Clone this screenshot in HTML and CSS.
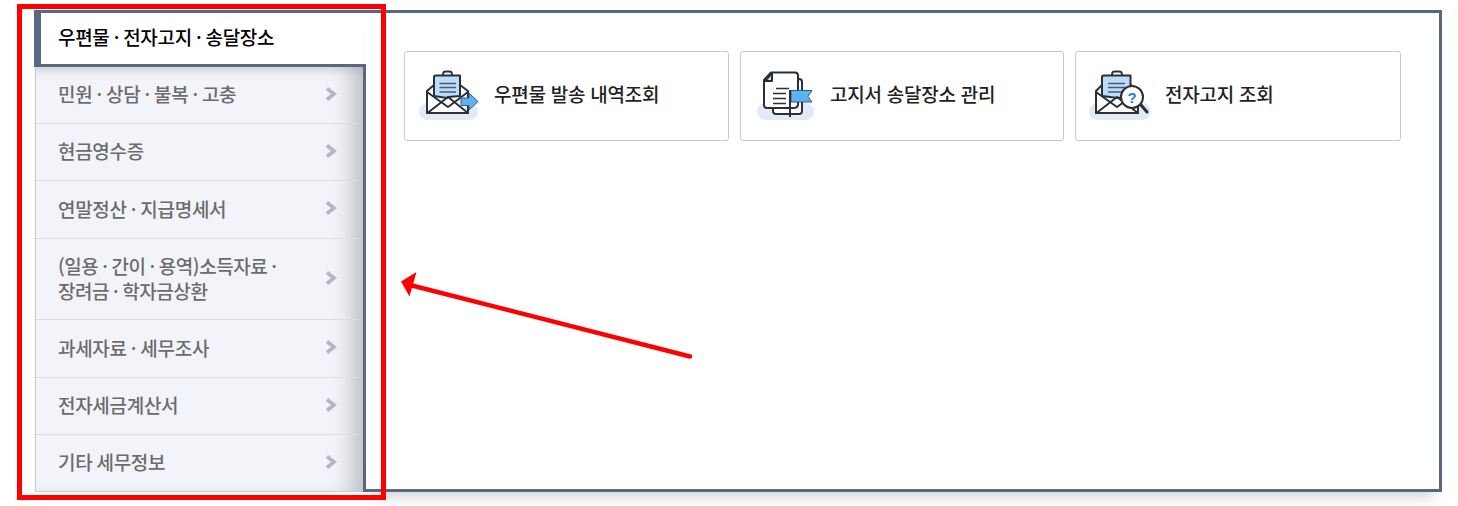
FILE: index.html
```html
<!DOCTYPE html>
<html lang="ko">
<head>
<meta charset="utf-8">
<title>우편물 · 전자고지 · 송달장소</title>
<link rel="stylesheet" href="styles.css">
</head>
<body>
<div class="board">
  <aside class="side">
    <div class="tab-active">우편물 · 전자고지 · 송달장소</div>
    <ul class="tabs">
      <li class="tab"><span>민원 · 상담 · 불복 · 고충</span><svg class="chev" viewBox="0 0 12 14"><path d="M2 1.5 9 7 2 12.5"/></svg></li>
      <li class="tab"><span>현금영수증</span><svg class="chev" viewBox="0 0 12 14"><path d="M2 1.5 9 7 2 12.5"/></svg></li>
      <li class="tab wide"><span>연말정산 · 지급명세서</span><svg class="chev" viewBox="0 0 12 14"><path d="M2 1.5 9 7 2 12.5"/></svg></li>
      <li class="tab tall"><span>(일용 · 간이 · 용역)소득자료 ·<br>장려금 · 학자금상환</span><svg class="chev" viewBox="0 0 12 14"><path d="M2 1.5 9 7 2 12.5"/></svg></li>
      <li class="tab wide"><span>과세자료 · 세무조사</span><svg class="chev" viewBox="0 0 12 14"><path d="M2 1.5 9 7 2 12.5"/></svg></li>
      <li class="tab"><span>전자세금계산서</span><svg class="chev" viewBox="0 0 12 14"><path d="M2 1.5 9 7 2 12.5"/></svg></li>
      <li class="tab"><span>기타 세무정보</span><svg class="chev" viewBox="0 0 12 14"><path d="M2 1.5 9 7 2 12.5"/></svg></li>
    </ul>
  </aside>
  <main class="panel">
    <a class="card">
      <svg class="icon" viewBox="0 0 62 56">
        <rect class="blob" x="1" y="35" width="59" height="17" rx="8.5"/>
        <path class="white ink" d="M9 23 16 17H42L50 23V45H9Z"/>
        <path class="pale ink" d="M16 28V9a1.500 1.500 0 0 1 1.500-1.500H42V28L30 29 29 30Z"/>
        <path class="ink none" d="M25 7.500C25 3 26 3.500 29.500 3.500S34 3 34 7.500"/>
        <path class="pale-line" d="M21.500 15.500H38M21.500 19.500H38M21.500 24H38"/>
        <path class="white ink" d="M9 24 30 39 50 24V45H9Z"/>
        <path class="ink none" d="M9.500 45 30 29 50 45"/>
        <path class="blue" d="M43 30H51V25L60 33.500 51 42V37.500H43Z"/>
      </svg>
      <span>우편물 발송 내역조회</span>
    </a>
    <a class="card">
      <svg class="icon" viewBox="0 0 62 56">
        <rect class="blob" x="3" y="35" width="57" height="17" rx="8.500"/>
        <rect class="white ink" x="19" y="11" width="29" height="35" rx="3"/>
        <path class="white ink" d="M17 4.500H41a3 3 0 0 1 3 3V37a4 4 0 0 1-4 3H13a3 3 0 0 1-3-3V12Z"/>
        <path class="pale ink" d="M18 5V13H11Z"/>
        <path class="pale-line dark" d="M22 20.500H35M19 25.500H32M19 30.500H32M19 35.500H32"/>
        <path class="blue" d="M37 22.500H58L54 28.500 58 34H37Z"/>
        <path class="pole" d="M36 22V49"/>
      </svg>
      <span>고지서 송달장소 관리</span>
    </a>
    <a class="card">
      <svg class="icon" viewBox="0 0 62 56">
        <rect class="blob" x="0" y="35" width="62" height="17" rx="8.500"/>
        <path class="white ink" d="M7 23 13 17H42L49 23V45H7Z"/>
        <path class="pale ink" d="M13 28V9a1.500 1.500 0 0 1 1.500-1.500H41.500V28L29 30Z"/>
        <path class="ink none" d="M23 7.500C23 3 24 3.500 28 3.500S33 3 33 7.500"/>
        <path class="pale-line" d="M19 15.500H36M19 19.500H36M19 24H36"/>
        <path class="white ink" d="M7 24 28 39 49 24V45H7Z"/>
        <path class="ink none" d="M7.500 45 28 29 49 45"/>
        <path class="handle" d="M52 37 58 44"/>
        <circle class="white ink" cx="43" cy="29" r="11"/>
        <text class="q" x="43" y="34.500">?</text>
      </svg>
      <span>전자고지 조회</span>
    </a>
  </main>
</div>
<div class="mark-box"></div>
<svg class="mark-arrow" viewBox="0 0 1458 506">
  <path class="arrow-line" d="M690 356.500 408 284.500"/>
  <path class="arrow-head" d="M401 281.500 416.500 272 409.500 296.500Z"/>
</svg>
</body>
</html>
```
FILE: styles.css
```css
* { box-sizing: border-box; }
html, body { margin: 0; padding: 0; background: #fff; }
body {
  font-family: "Noto Sans CJK KR", "Noto Sans", sans-serif;
  font-size: 19px;
  letter-spacing: -0.3px;
  overflow: hidden;
  height: 506px;
}
.board {
  display: flex;
  width: 1408px;
  height: 482px;
  margin: 10px 0 0 34px;
}
.side {
  width: 332px;
  flex: none;
  display: flex;
  flex-direction: column;
  word-spacing: -0.9px;
}
.tab-active {
  height: 57px;
  padding: 0 0 4px 17px;
  display: flex;
  align-items: center;
  background: #fff;
  border-top: 3px solid #5a6782;
  border-left: 7px solid #5a6782;
  border-bottom: 3px solid #5a6782;
  color: #000;
  font-weight: 500;
}
.tabs {
  flex: 1;
  list-style: none;
  margin: 0;
  padding: 0 3px 0 1px;
  position: relative;
  background: #f3f4fa;
  border-right: 3px solid #5a6782;
}
.tabs::before {
  content: "";
  position: absolute;
  inset: 0 0 0 1px;
  box-shadow: inset -20px 0 20px -8px rgba(0,0,0,.2), inset 0 14px 12px -12px rgba(0,0,0,.14);
}
.tab {
  height: 57px;
  padding: 0 23px 3px 22px;
  display: flex;
  align-items: center;
  justify-content: space-between;
  position: relative;
  color: #6c6c6c;
  font-weight: 500;
  line-height: 25px;
  border-left: 1px solid #cdcdcd;
  border-bottom: 1px solid #dcdce2;
}
.tab.wide { height: 58px; }
.tab.tall { height: 81px; letter-spacing: -0.45px; }
.tab:last-child { border-bottom-color: #cdcdcd; }
.chev {
  width: 12px;
  height: 14px;
  flex: none;
  fill: none;
  stroke: #b4b6c3;
  stroke-width: 3.6;
}
.panel {
  flex: 1;
  display: grid;
  grid-template-columns: 325px 324px 1fr;
  grid-auto-rows: 90px;
  gap: 11px;
  align-content: start;
  padding: 38px;
  border: 3px solid #5a6782;
  border-left: 0;
  background: #fff;
  box-shadow: 0 14px 12px -8px rgba(0,0,0,.16);
}
.card {
  display: flex;
  align-items: center;
  gap: 14px;
  padding-left: 13px;
  border: 1px solid #c9c9c9;
  border-radius: 3px;
  color: #222;
  font-weight: 500;
  letter-spacing: -0.25px;
}
.card span { padding-bottom: 6px; }
.icon { width: 62px; height: 56px; flex: none; }
.blob { fill: #e3eaf6; }
.white { fill: #fff; }
.pale { fill: #bcdcf8; }
.ink { stroke: #2c2f36; stroke-width: 2; stroke-linejoin: round; }
.none { fill: none; }
.pale-line { fill: none; stroke: #4a5a70; stroke-width: 1.5; }
.pale-line.dark { stroke: #2c2f36; }
.blue { fill: #5fb2f2; stroke: #2f5f88; stroke-width: 1; }
.pole { stroke: #2c2f36; stroke-width: 2; }
.handle { stroke: #2c2f36; stroke-width: 3; stroke-linecap: round; }
.q {
  fill: #1f7fd0;
  font-family: "Liberation Sans", sans-serif;
  font-weight: 700;
  font-size: 15px;
  text-anchor: middle;
  letter-spacing: 0;
}
.mark-box {
  position: absolute;
  left: 17px;
  top: 4px;
  width: 369px;
  height: 496px;
  border: 5px solid #f00;
}
.mark-arrow {
  position: absolute;
  left: 0;
  top: 0;
  width: 1458px;
  height: 506px;
  pointer-events: none;
}
.arrow-line { stroke: #f00; stroke-width: 4.5; stroke-linecap: round; fill: none; }
.arrow-head { fill: #f00; }
```
